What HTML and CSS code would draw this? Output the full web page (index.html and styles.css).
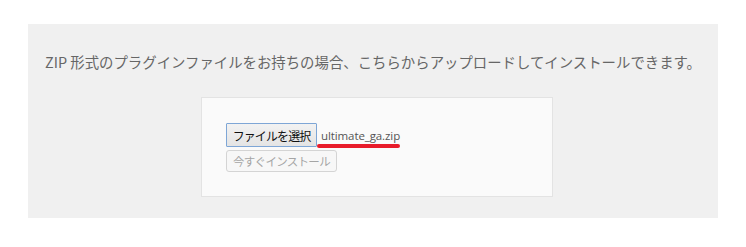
FILE: index.html
```html
<!DOCTYPE html>
<html lang="ja">
<head>
<meta charset="utf-8">
<link rel="stylesheet" href="styles.css">
</head>
<body>
<div class="upload-plugin">
  <p class="install-help">ZIP 形式のプラグインファイルをお持ちの場合、こちらからアップロードしてインストールできます。</p>
  <form class="upload-form">
    <div class="file-row">
      <span class="file-btn">ファイルを選択</span>
      <span class="file-name">ultimate_ga.zip</span>
      <span class="marker"></span>
    </div>
    <span class="install-btn">今すぐインストール</span>
  </form>
</div>
</body>
</html>
```
FILE: styles.css
```css
html, body {
  margin: 0;
  padding: 0;
  background: #ffffff;
}
body {
  font-family: "Noto Sans CJK JP", "Open Sans", sans-serif;
}
.upload-plugin {
  box-sizing: border-box;
  width: 690px;
  height: 194px;
  margin: 24px 0 0 28px;
  padding-top: 27px;
  background: #f0f0f0;
}
.install-help {
  margin: 0;
  font-size: 14.4px;
  line-height: 21px;
  color: #666;
  text-align: center;
  white-space: nowrap;
}
.upload-form {
  box-sizing: border-box;
  width: 352px;
  height: 100px;
  margin: 25px 0 0 173px;
  padding: 25px 0 0 24px;
  background: #fafafa;
  border: 1px solid #e3e3e3;
  display: flex;
  flex-direction: column;
  align-items: flex-start;
  gap: 3px;
}
.file-row {
  position: relative;
  display: flex;
  align-items: center;
  gap: 4px;
}
.file-btn {
  box-sizing: border-box;
  width: 91px;
  height: 24px;
  display: flex;
  align-items: center;
  justify-content: center;
  border: 1px solid #7ea6d6;
  border-radius: 1px;
  background: linear-gradient(#f2f2f2, #e4e4e4);
  color: #111;
  font-size: 12px;
  letter-spacing: -0.9px;
}
.file-name {
  font-family: "Open Sans", "Liberation Sans", sans-serif;
  font-size: 11.5px;
  color: #555;
  letter-spacing: -0.1px;
}
.marker {
  position: absolute;
  left: 91px;
  top: 21px;
  width: 83px;
  height: 4px;
  border-radius: 2px;
  background: #e81c2b;
}
.install-btn {
  box-sizing: border-box;
  width: 111px;
  height: 22px;
  display: flex;
  align-items: center;
  justify-content: center;
  border: 1px solid #d4d4d4;
  border-radius: 3px;
  background: #f7f7f7;
  color: #a5a5a5;
  font-size: 11.5px;
  letter-spacing: -0.7px;
}
```
